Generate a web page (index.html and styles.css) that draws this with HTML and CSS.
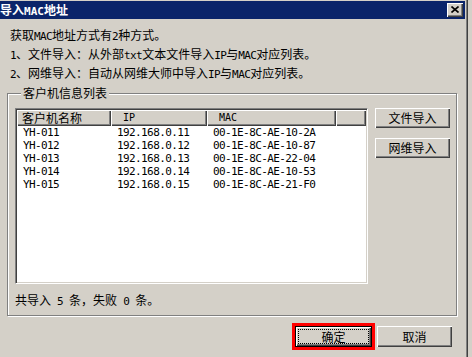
FILE: index.html
```html
<!DOCTYPE html>
<html lang="zh-CN">
<head>
    <meta charset="UTF-8">
    <title>导入MAC地址</title>
    <link rel="stylesheet" href="styles.css">
</head>
<body>

<div class="window">
    <div class="titlebar">
        <span class="title">导入<span class="en">MAC</span>地址</span>
        <span class="close-btn">
            <svg width="8" height="7" viewBox="0 0 8 7">
                <path d="M0.5 0.5 L7.5 6.5 M7.5 0.5 L0.5 6.5" stroke="#000" stroke-width="1.6" fill="none"/>
            </svg>
        </span>
    </div>

    <div class="intro">
        <p>获取<span class="en">MAC</span>地址方式有<span class="en">2</span>种方式。</p>
        <p><span class="en">1</span>、文件导入：从外部<span class="en">txt</span>文本文件导入<span class="en">IP</span>与<span class="en">MAC</span>对应列表。</p>
        <p><span class="en">2</span>、网维导入：自动从网维大师中导入<span class="en">IP</span>与<span class="en">MAC</span>对应列表。</p>
    </div>

    <fieldset class="group">
        <legend>客户机信息列表</legend>
        <div class="group-body">
            <div class="listview">
                <div class="lv-row lv-head">
                    <div class="hd">客户机名称</div>
                    <div class="hd hd-en">IP</div>
                    <div class="hd hd-en">MAC</div>
                    <div class="hd"></div>
                </div>
                <div class="lv-row">
                    <div>YH-011</div><div>192.168.0.11</div><div>00-1E-8C-AE-10-2A</div><div></div>
                </div>
                <div class="lv-row">
                    <div>YH-012</div><div>192.168.0.12</div><div>00-1E-8C-AE-10-87</div><div></div>
                </div>
                <div class="lv-row">
                    <div>YH-013</div><div>192.168.0.13</div><div>00-1E-8C-AE-22-04</div><div></div>
                </div>
                <div class="lv-row">
                    <div>YH-014</div><div>192.168.0.14</div><div>00-1E-8C-AE-10-53</div><div></div>
                </div>
                <div class="lv-row">
                    <div>YH-015</div><div>192.168.0.15</div><div>00-1E-8C-AE-21-F0</div><div></div>
                </div>
            </div>
            <div class="side-buttons">
                <button class="btn">文件导入</button>
                <button class="btn">网维导入</button>
            </div>
        </div>
        <div class="summary">共导入<span class="en"> 5 </span>条，失败<span class="en"> 0 </span>条。</div>
    </fieldset>

    <div class="footer">
        <button class="btn btn-default"><span class="focus">确定</span></button>
        <button class="btn">取消</button>
    </div>
</div>

</body>
</html>
```

FILE: styles.css
```css
body {
    margin: 0;
    background-color: #D4D0C8;
    font-family: "Noto Sans CJK SC", "Liberation Sans", sans-serif;
    font-size: 12px;
    color: #000;
    overflow: hidden;
}
.en {
    font-family: "DejaVu Sans Mono", monospace;
    font-size: 11px;
    letter-spacing: -0.6px;
    line-height: 10px;
}
.window {
    width: 467px;
    height: 357px;
    padding-top: 1px;
    box-sizing: border-box;
    border-right: 1px solid #808080;
    box-shadow: 1px 0 0 #404040;
}
.titlebar {
    height: 18px;
    margin-right: 1px;
    background-color: #0A246A;
    display: flex;
    align-items: center;
    justify-content: space-between;
}
.title {
    color: #FFF;
    font-weight: bold;
    line-height: 18px;
}
.title .en {
    font-weight: bold;
    letter-spacing: 0;
}
.close-btn {
    width: 16px;
    height: 14px;
    margin-right: 2px;
    box-sizing: border-box;
    background-color: #D4D0C8;
    box-shadow: inset 1px 1px 0 #FFF, inset -1px -1px 0 #404040, inset -2px -2px 0 #808080;
    display: flex;
    align-items: center;
    justify-content: center;
}
.close-btn svg {
    display: block;
    margin: -1px 1px 0 0;
}
.intro {
    padding: 6px 0 0 10px;
    height: 57px;
}
.intro p {
    margin: 0;
    height: 19px;
    line-height: 19px;
}
.group {
    margin: 3px 9px 0 7px;
    padding: 7px 6px 7px 7px;
    border: 1px solid #808080;
    box-shadow: inset 1px 1px 0 #FFF, 1px 1px 0 #FFF;
    min-width: 0;
}
.group legend {
    margin-left: 6px;
    padding: 0 2px;
    height: 16px;
    line-height: 16px;
    background-color: #D4D0C8;
}
.group-body {
    display: flex;
    align-items: flex-start;
}
.listview {
    width: 356px;
    height: 176px;
    box-sizing: border-box;
    background-color: #FFF;
    border: 1px solid;
    border-color: #808080 #FFF #FFF #808080;
    box-shadow: inset 1px 1px 0 #404040, inset -1px -1px 0 #D4D0C8;
    padding: 1px;
}
.lv-row {
    display: grid;
    grid-template-columns: 94px 96px 129px 1fr;
    height: 13px;
    font-family: "DejaVu Sans Mono", monospace;
    font-size: 11px;
    letter-spacing: -0.6px;
    line-height: 13px;
}
.lv-row div {
    padding-left: 6px;
    white-space: nowrap;
    overflow: hidden;
}
.lv-row.lv-head {
    height: 16px;
}
.lv-head .hd {
    font-family: "Noto Sans CJK SC", sans-serif;
    font-size: 12px;
    letter-spacing: 0;
    line-height: 15px;
    padding-left: 5px;
    background-color: #D4D0C8;
    box-shadow: inset 1px 1px 0 #FFF, inset -1px -1px 0 #404040, inset -2px -2px 0 #808080;
}
.lv-head .hd-en {
    font-family: "DejaVu Sans Mono", monospace;
    font-size: 10px;
    line-height: 16px;
    padding-left: 12px;
}
.side-buttons {
    margin-left: 7px;
    display: flex;
    flex-direction: column;
    gap: 10px;
}
.btn {
    width: 75px;
    height: 21px;
    padding: 0;
    margin: 0;
    border: none;
    font-family: "Noto Sans CJK SC", sans-serif;
    font-size: 12px;
    line-height: 14px;
    color: #000;
    background-color: #D4D0C8;
    box-shadow: inset 1px 1px 0 #FFF, inset -1px -1px 0 #404040, inset -2px -2px 0 #808080;
}
.side-buttons .btn {
    height: 20px;
}
.summary {
    margin-top: 8px;
    height: 16px;
    line-height: 16px;
}
.footer {
    display: flex;
    justify-content: flex-end;
    align-items: flex-start;
    gap: 5px;
    padding: 10px 14px 0 0;
}
.btn-default {
    width: 77px;
    border: 1px solid #000;
    outline: 3px solid #F00;
    padding: 2px;
}
.btn-default .focus {
    display: block;
    height: 13px;
    line-height: 13px;
    border: 1px dotted #000;
}
```
